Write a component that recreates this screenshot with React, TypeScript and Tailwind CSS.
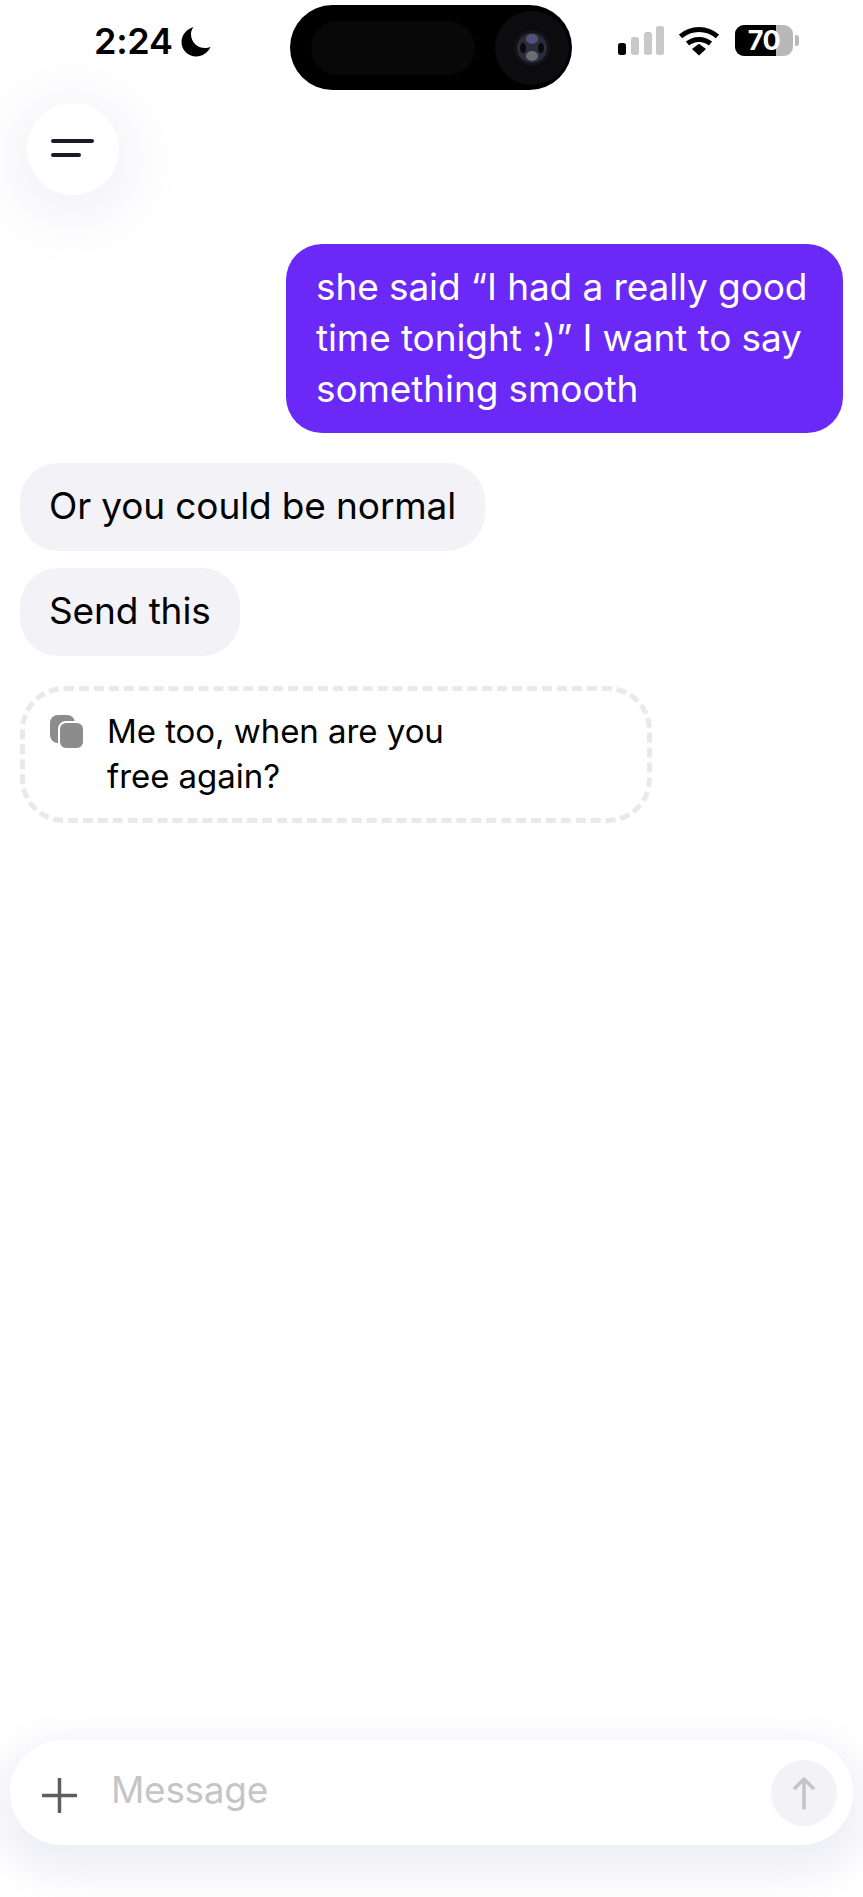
import React from "react";

function Signal() {
  return (
    <svg width="49" height="30" viewBox="0 0 49 30">
      <rect x="0" y="17" width="8" height="12" rx="2.5" fill="#000" />
      <rect x="13" y="11" width="8" height="18" rx="2.5" fill="#c9c9c9" />
      <rect x="26" y="6" width="8" height="23" rx="2.5" fill="#c9c9c9" />
      <rect x="38" y="0" width="8" height="29" rx="2.5" fill="#c9c9c9" />
    </svg>
  );
}

function Wifi() {
  return (
    <svg width="40" height="30" viewBox="0 0 40 30" fill="none">
      <path d="M1.5 10.5C12 1 28 1 38.5 10.5" stroke="#000" strokeWidth="5" />
      <path d="M8.5 17.5C15 12 25 12 31.5 17.5" stroke="#000" strokeWidth="5" />
      <path d="M13 23L20 17.8L27 23L20 29.5Z" fill="#000" />
    </svg>
  );
}

function Battery() {
  return (
    <div className="flex items-center gap-[2px]">
      <div className="relative flex h-[31px] w-[58px] items-center justify-center rounded-[9px] bg-[#b8b8b8]">
        <div className="absolute inset-y-0 left-0 w-[41px] rounded-l-[9px] bg-black" />
        <span className="relative text-[27px] leading-none font-bold tracking-[-0.5px] text-white">70</span>
      </div>
      <div className="h-[11px] w-[4px] rounded-r-[3px] bg-[#b8b8b8]" />
    </div>
  );
}

function Island() {
  return (
    <div className="flex h-[85px] w-[282px] items-center justify-between rounded-[43px] bg-black pr-[3px] pl-[21px]">
      <div className="h-[54px] w-[164px] rounded-[27px] bg-[#080808]" />
      <div className="flex h-[74px] w-[74px] items-center justify-center rounded-full bg-[#0c0c0e]">
        <svg width="36" height="36" viewBox="0 0 36 36">
          <circle cx="18" cy="18" r="18" fill="#121218" />
          <circle cx="18" cy="18" r="15" fill="#2b2b3b" />
          <ellipse cx="18" cy="9" rx="6" ry="5" fill="#55556a" />
          <circle cx="18" cy="9" r="2" fill="#5a3fd0" />
          <ellipse cx="18" cy="26" rx="6" ry="5" fill="#6e6e70" />
          <ellipse cx="9" cy="18" rx="3" ry="5" fill="#0a0a0e" />
          <ellipse cx="27" cy="18" rx="3" ry="5" fill="#0a0a0e" />
        </svg>
      </div>
    </div>
  );
}

export default function App() {
  return (
    <div
      className="flex h-[1897px] w-[863px] flex-col overflow-hidden bg-white text-black"
      style={{ fontFamily: "Inter, 'Liberation Sans', sans-serif" }}
    >
      <header className="flex h-[103px] shrink-0 items-start pt-[5px]">
        <div className="flex w-[290px] items-center pt-[18px] pl-[94px]">
          <span className="text-[36px] leading-[36px] font-semibold tracking-[-0.3px]">2:24</span>
          <svg className="ml-[8px]" width="31" height="31" viewBox="0 0 31 31">
            <path d="M12.5 1C5.5 3 .5 9 .5 16c0 8 6.5 14.5 14.5 14.5 6.5 0 12-4 14.5-9.5-1.5.5-3.5 1-5.5 1-8 0-14-6-14-14 0-2.500.8-4.800 2.500-7Z" fill="#000" />
          </svg>
        </div>
        <Island />
        <div className="flex items-center pt-[20px] pl-[46px]">
          <Signal />
          <div className="ml-[12px]"><Wifi /></div>
          <div className="ml-[16px]"><Battery /></div>
        </div>
      </header>

      <div className="ml-[27px] flex h-[92px] w-[92px] shrink-0 items-center justify-center rounded-full bg-white shadow-[0_10px_60px_16px_rgba(226,226,240,0.45)]">
        <svg className="-translate-y-[1px]" width="44" height="20" viewBox="0 0 44 20">
          <path d="M2 3H41M2 17H28" stroke="#1a1a28" strokeWidth="4" strokeLinecap="round" />
        </svg>
      </div>

      <main className="flex flex-1 flex-col items-start px-[20px] pt-[49px]">
        <div className="w-[557px] self-end rounded-[36px] bg-[#6a29f6] px-[30px] pt-[17px] pb-[19px] text-[37px] leading-[51px] tracking-[-0.1px] text-white">
          <p>she said “I had a really good</p>
          <p>time tonight :)” I want to say</p>
          <p>something smooth</p>
        </div>
        <div className="mt-[30px] rounded-[38px] bg-[#f2f2f7] px-[29px] pt-[18px] pb-[20px] text-[37px] leading-[50px] tracking-[-0.12px]">
          Or you could be normal
        </div>
        <div className="mt-[17px] rounded-[38px] bg-[#f2f2f7] px-[29px] pt-[18px] pb-[20px] text-[37px] leading-[50px] tracking-[-0.12px]">
          Send this
        </div>
        <div className="mt-[30px] flex h-[137px] w-[632px] items-start rounded-[44px] border-[5px] border-dashed border-[#e9e9e9] pt-[18px] pl-[25px]">
          <svg className="mt-[6px]" width="34" height="34" viewBox="0 0 34 34">
            <rect x="0" y="0" width="25" height="28" rx="8" fill="#8c8c8c" />
            <rect x="9" y="7" width="25" height="27" rx="7" fill="#8c8c8c" stroke="#fff" strokeWidth="2" />
          </svg>
          <div className="ml-[23px] text-[33px] leading-[45px] tracking-[-0.05px]">
            <p>Me too, when are you</p>
            <p>free again?</p>
          </div>
        </div>
      </main>

      <div className="mx-[10px] mb-[52px] flex h-[105px] shrink-0 items-center justify-between rounded-[52px] bg-white pr-[16px] pl-[32px] shadow-[0_16px_36px_14px_rgba(230,230,242,0.65)]">
        <div className="flex items-center">
          <svg className="translate-y-[3px]" width="35" height="35" viewBox="0 0 35 35">
            <path d="M17.500 1V34M1 17.500H34" stroke="#5e5e5e" strokeWidth="3.500" strokeLinecap="round" />
          </svg>
          <span className="ml-[34px] -translate-y-[3px] text-[37px] leading-none tracking-[-0.3px] text-[#c5c5c7]">Message</span>
        </div>
        <div className="flex h-[66px] w-[66px] items-center justify-center rounded-full bg-[#f2f2f7]">
          <svg width="24" height="34" viewBox="0 0 24 34" fill="none">
            <path d="M12 32V3M3 12L12 3L21 12" stroke="#c4c4c6" strokeWidth="3.500" strokeLinecap="round" strokeLinejoin="round" />
          </svg>
        </div>
      </div>
    </div>
  );
}
